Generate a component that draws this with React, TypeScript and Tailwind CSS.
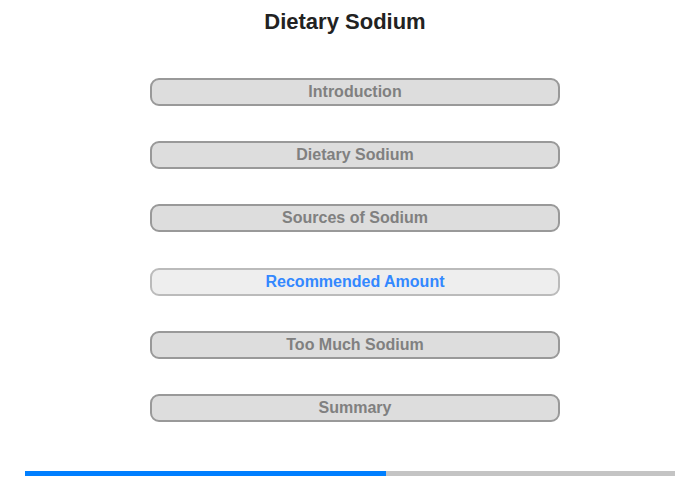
import React from "react";

const items = [
  "Introduction",
  "Dietary Sodium",
  "Sources of Sodium",
  "Recommended Amount",
  "Too Much Sodium",
  "Summary",
];
const active = 3;

export default function App() {
  return (
    <div
      className="w-[700px] h-[480px] bg-white flex flex-col"
      style={{ fontFamily: '"Liberation Sans", Arial, sans-serif' }}
    >
      <div className="pt-[9px] pr-[10px] text-center text-[22px] leading-[26px] font-bold text-[#222222]">
        Dietary Sodium
      </div>
      <div className="mt-[43px] flex flex-col gap-[35.2px] items-start pl-[150px]">
        {items.map((t, i) => (
          <div
            key={t}
            className={
              i === active
                ? "w-[410px] h-[28px] rounded-[9px] border-2 border-[#bbbbbb] bg-[#eeeeee] flex items-center justify-center text-[16px] font-bold text-[#3388ff]"
                : "w-[410px] h-[28px] rounded-[9px] border-2 border-[#999999] bg-[#dddddd] flex items-center justify-center text-[16px] font-bold text-[#808080]"
            }
          >
            {t}
          </div>
        ))}
      </div>
      <div className="mt-[49px] ml-[25px] w-[650px] h-[5px] flex bg-[#c4c4c4]">
        <div className="w-[361px] h-full bg-[#007fff]" />
      </div>
    </div>
  );
}
